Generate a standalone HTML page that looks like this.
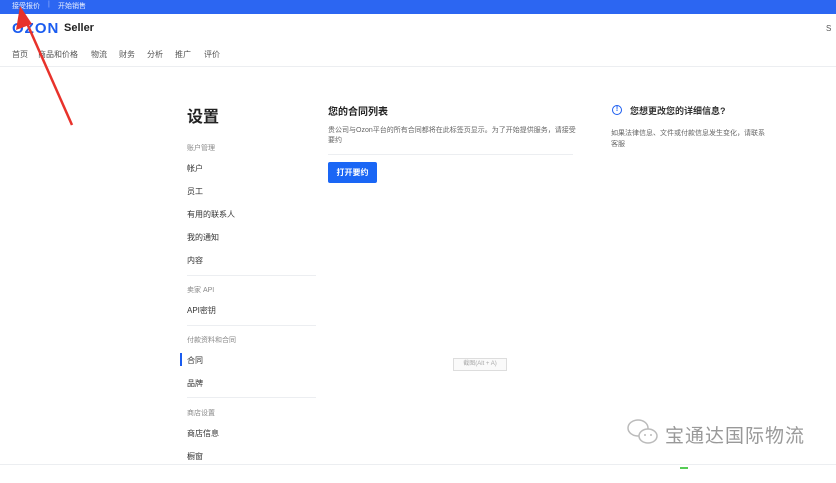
<!DOCTYPE html>
<html><head><meta charset="utf-8"><style>
*{margin:0;padding:0;box-sizing:border-box}
body{width:836px;height:483px;overflow:hidden;background:#fff;font-family:"Liberation Sans","Noto Sans CJK SC",sans-serif;position:relative;color:#333}
.a{position:absolute;white-space:nowrap}
.topbar{position:absolute;left:0;top:0;width:836px;height:14px;background:#2c66f2}
.s{font-size:8px;color:#333}
.g{font-size:7px;color:#888}
.hr{position:absolute;height:1px;background:#eceef1}
</style></head><body>
<div class="topbar"></div>
<div class="a" style="left:12px;top:1px;font-size:7px;color:#e8efff">接受报价</div>
<div class="a" style="left:48px;top:1px;font-size:7px;color:#9fbaff">|</div>
<div class="a" style="left:58px;top:1px;font-size:7px;color:#e8efff">开始销售</div>
<div class="a" style="left:12px;top:20px;font-size:15px;font-weight:bold;color:#1a5cf0;letter-spacing:1px">OZON</div>
<div class="a" style="left:64px;top:22px;font-size:11px;font-weight:bold;color:#222">Seller</div>
<div class="a" style="left:826px;top:24px;font-size:8px;color:#555">S</div>
<div class="a s" style="left:12px;top:49px;color:#555">首页</div>
<div class="a s" style="left:38px;top:49px;color:#555">商品和价格</div>
<div class="a s" style="left:91px;top:49px;color:#555">物流</div>
<div class="a s" style="left:119px;top:49px;color:#555">财务</div>
<div class="a s" style="left:147px;top:49px;color:#555">分析</div>
<div class="a s" style="left:175px;top:49px;color:#555">推广</div>
<div class="a s" style="left:204px;top:49px;color:#555">评价</div>
<div class="hr" style="left:0;top:66px;width:836px"></div>

<div class="a" style="left:187px;top:103px;font-size:16px;font-weight:bold;color:#222">设置</div>
<div class="a g" style="left:187px;top:143px">账户管理</div>
<div class="a s" style="left:187px;top:163px">帐户</div>
<div class="a s" style="left:187px;top:186px">员工</div>
<div class="a s" style="left:187px;top:209px">有用的联系人</div>
<div class="a s" style="left:187px;top:232px">我的通知</div>
<div class="a s" style="left:187px;top:255px">内容</div>
<div class="hr" style="left:187px;top:275px;width:129px"></div>
<div class="a g" style="left:187px;top:285px">卖家 API</div>
<div class="a s" style="left:187px;top:305px">API密钥</div>
<div class="hr" style="left:187px;top:325px;width:129px"></div>
<div class="a g" style="left:187px;top:335px">付款资料和合同</div>
<div class="a" style="left:180px;top:353px;width:2px;height:13px;background:#1a5cf0"></div>
<div class="a s" style="left:187px;top:355px">合同</div>
<div class="a s" style="left:187px;top:378px">品牌</div>
<div class="hr" style="left:187px;top:397px;width:129px"></div>
<div class="a g" style="left:187px;top:408px">商店设置</div>
<div class="a s" style="left:187px;top:428px">商店信息</div>
<div class="a s" style="left:187px;top:451px">橱窗</div>

<div class="a" style="left:328px;top:103px;font-size:10px;font-weight:bold;color:#222">您的合同列表</div>
<div class="a" style="left:328px;top:126px;font-size:7px;color:#666;line-height:10px;white-space:normal;width:250px">贵公司与Ozon平台的所有合同都将在此标签页显示。为了开始提供服务，请接受要约</div>
<div class="hr" style="left:328px;top:154px;width:245px"></div>
<div class="a" style="left:328px;top:162px;width:49px;height:21px;background:#1a66f5;border-radius:2px;color:#fff;font-size:8px;font-weight:bold;text-align:center;line-height:21px">打开要约</div>

<div class="a" style="left:612px;top:105px;width:10px;height:10px;border:1.5px solid #1a5cf0;border-radius:50%;font-size:7px;color:#1a5cf0;text-align:center;line-height:7px;font-weight:bold">!</div>
<div class="a" style="left:630px;top:104px;font-size:9px;font-weight:bold;color:#333">您想更改您的详细信息?</div>
<div class="a" style="left:611px;top:128px;font-size:7px;color:#666;line-height:11px;white-space:normal;width:160px;word-break:break-all">如果法律信息、文件或付款信息发生变化，请联系客服</div>

<div class="a" style="left:453px;top:358px;width:54px;height:13px;border:1px solid #ddd;background:#fafafa;font-size:6px;color:#aaa;text-align:center;line-height:11px">截图(Alt + A)</div>

<svg class="a" style="left:626px;top:418px" width="36" height="30" viewBox="0 0 36 30"><ellipse cx="12" cy="10" rx="10" ry="8" fill="none" stroke="#bbb" stroke-width="1.5"/><ellipse cx="22" cy="18" rx="9" ry="7" fill="#fff" stroke="#bbb" stroke-width="1.5"/><circle cx="19" cy="17" r="1" fill="#bbb"/><circle cx="25" cy="17" r="1" fill="#bbb"/></svg>
<div class="a" style="left:665px;top:421px;font-size:19px;color:#999;letter-spacing:1px">宝通达国际物流</div>
<div class="hr" style="left:0;top:464px;width:836px"></div>
<div class="a" style="left:680px;top:467px;width:8px;height:2px;background:#5c5"></div>

<svg class="a" style="left:0;top:0" width="100" height="140"><line x1="22" y1="12" x2="72" y2="125" stroke="#e8322b" stroke-width="2.5"/><polygon points="20,6 16,30 32,24" fill="#e8322b"/></svg>
</body></html>
